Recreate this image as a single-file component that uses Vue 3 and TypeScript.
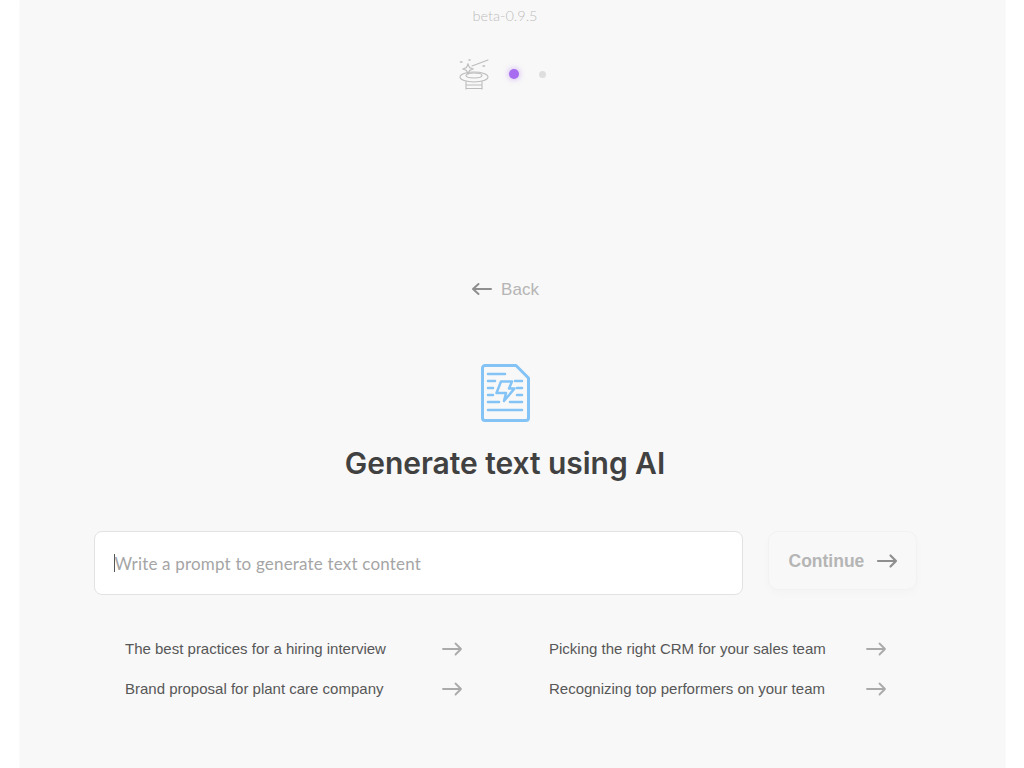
<script setup lang="ts">
const suggestions: string[] = [
  'The best practices for a hiring interview',
  'Picking the right CRM for your sales team',
  'Brand proposal for plant care company',
  'Recognizing top performers on your team',
]
</script>

<template>
  <main class="panel">
    <div class="column">
      <div class="version">beta-0.9.5</div>
      <div class="steps">
        <svg class="wand" width="32" height="32" viewBox="0 0 32 32" fill="none" stroke="#bcbcbc" stroke-width="1.1" stroke-linecap="round">
          <path d="M13 8 29 2" />
          <path d="M9 6l1.500 3.500L14 11l-3.500 1.500L9 16l-1.500-3.500L4 11l3.500-1.500z" />
          <path d="M1.500 4h1.500M10 2h1M24 8h1.500" stroke-width="1.500" />
          <ellipse cx="15" cy="19" rx="14" ry="5" />
          <path d="M7 17.500C7 16 11 15 15 15s8 1 8 2.500-4 2.500-8 2.500-8-1-8-2.500Z" />
          <path d="M7 23.500V31M23 23.500V31M7 27h16M7 30.500h16" />
        </svg>
        <span class="dot active"></span>
        <span class="dot"></span>
      </div>
      <div class="back">
        <svg width="22" height="16" viewBox="0 0 22 16" fill="none" stroke="#8f8f8f" stroke-width="2" stroke-linecap="round" stroke-linejoin="round">
          <path d="M20 8H2M7.500 3 2 8l5.500 5" />
        </svg>
        <span>Back</span>
      </div>
      <svg class="doc" width="50" height="60" viewBox="0 0 50 60" fill="none" stroke="#84c3f5" stroke-width="3" stroke-linecap="round" stroke-linejoin="round">
        <path d="M5 2.500H36L48.500 15V55a2.500 2.500 0 0 1-2.500 2.500H5A2.500 2.500 0 0 1 2.500 55V5A2.500 2.500 0 0 1 5 2.500Z" />
        <path d="M8 11H25M8 18H15M8 25H13M8 32H13M8 39H19M8 47H42M35 18H42M37 25H42M37 32H42M30 39H42" stroke-width="2.500" />
        <path d="M21 18.500H32L29 25.500H34.500L24 38 26 30H16.500Z" stroke-width="2.500" />
      </svg>
      <h1 class="title">Generate text using AI</h1>
      <div class="prompt-row">
        <div class="prompt">
          <span class="caret"></span>
          <span class="placeholder">Write a prompt to generate text content</span>
        </div>
        <button class="continue" type="button">
          <span>Continue</span>
          <svg width="22" height="16" viewBox="0 0 22 16" fill="none" stroke="#8f8f8f" stroke-width="2.200" stroke-linecap="round" stroke-linejoin="round">
            <path d="M2 8H20M14.500 2.500 20 8l-5.500 5.500" />
          </svg>
        </button>
      </div>
      <ul class="suggestions">
        <li v-for="item in suggestions" :key="item" class="suggestion">
          <span>{{ item }}</span>
          <svg width="22" height="16" viewBox="0 0 22 16" fill="none" stroke="#aaaaaa" stroke-width="1.800" stroke-linecap="round" stroke-linejoin="round">
            <path d="M2 8H20M14.500 2.500 20 8l-5.500 5.500" />
          </svg>
        </li>
      </ul>
    </div>
  </main>
</template>

<style>
html, body { background: #ffffff; }
</style>

<style scoped>
.panel {
  box-sizing: border-box;
  width: 985px;
  height: 768px;
  margin-left: 20px;
  padding-right: 15px;
  background: #f8f8f8;
  box-shadow: 0 0 2px rgba(0, 0, 0, 0.05);
  overflow: hidden;
}
.column {
  display: flex;
  flex-direction: column;
  align-items: center;
}
.version {
  margin-top: 7px;
  font: 300 14.500px/17px Lato, sans-serif;
  color: #bdbdbd;
}
.steps {
  display: flex;
  align-items: center;
  margin-top: 34px;
  margin-left: -6px;
  height: 32px;
}
.wand { margin-right: 18px; }
.dot {
  width: 7px;
  height: 7px;
  margin-right: 20px;
  border-radius: 50%;
  background: #dedede;
}
.dot.active {
  width: 10px;
  height: 10px;
  margin-right: 20px;
  background: #a76cf0;
  box-shadow: 0 0 6px rgba(167, 108, 240, 0.6);
}
.dot:last-child { margin-right: 0; }
.back {
  display: flex;
  align-items: center;
  gap: 8px;
  margin-top: 188px;
  height: 24px;
  font: 400 17px/24px "Liberation Sans", sans-serif;
  color: #b5b5b5;
}
.back svg { position: relative; top: -1px; }
.doc { margin-top: 61px; }
.title {
  margin: 19px 0 0;
  font: 600 30px/42px Inter, sans-serif;
  letter-spacing: -0.05px;
  color: #414141;
}
.prompt-row {
  display: flex;
  align-items: flex-start;
  gap: 25px;
  width: 823px;
  margin-top: 47px;
}
.prompt {
  box-sizing: border-box;
  display: flex;
  align-items: center;
  width: 649px;
  height: 64px;
  padding-left: 19px;
  background: #ffffff;
  border: 1px solid #e2e2e2;
  border-radius: 8px;
}
.caret {
  width: 1px;
  height: 18px;
  background: #555555;
}
.placeholder {
  padding-top: 2px;
  font: 400 17px/24px Lato, sans-serif;
  letter-spacing: 0.18px;
  color: #a5a5a5;
}
.continue {
  box-sizing: border-box;
  display: flex;
  align-items: center;
  justify-content: space-between;
  width: 149px;
  height: 59px;
  padding: 0 18px 0 20px;
  background: #f8f8f8;
  border: 1px solid #f2f2f2;
  border-radius: 10px;
  box-shadow: 0 4px 10px rgba(0, 0, 0, 0.02);
  font: 700 17.500px/24px "Liberation Sans", sans-serif;
  color: #b5b5b5;
}
.suggestions {
  display: grid;
  grid-template-columns: 338px 338px;
  column-gap: 86px;
  row-gap: 16px;
  margin: 42px 0 0 2px;
  padding: 0;
  list-style: none;
}
.suggestion {
  display: flex;
  align-items: center;
  justify-content: space-between;
  height: 24px;
  font: 400 15px/24px "Liberation Sans", sans-serif;
  color: #575757;
}
</style>
